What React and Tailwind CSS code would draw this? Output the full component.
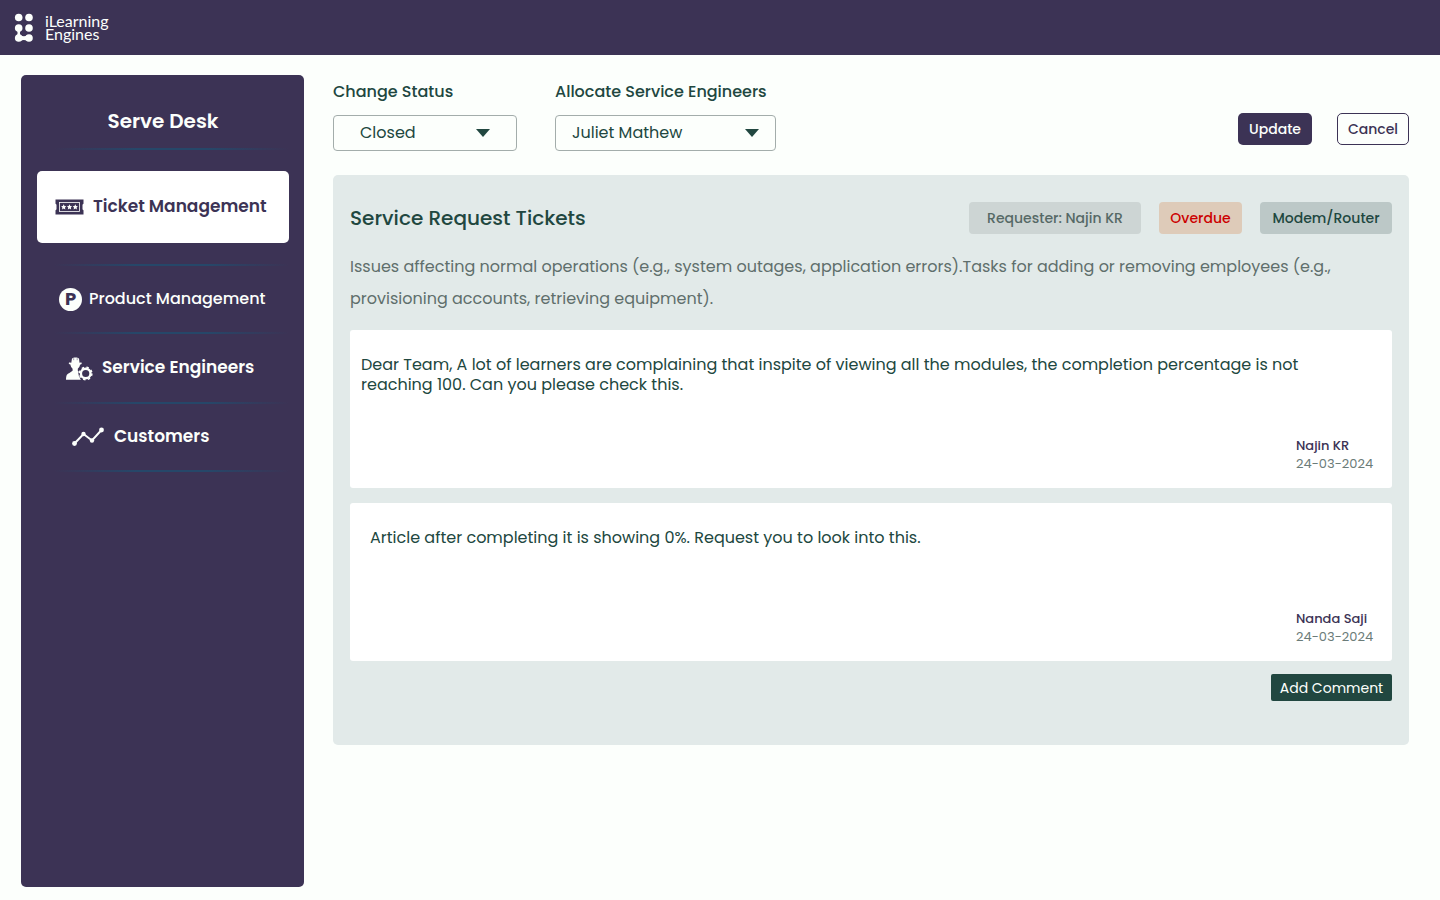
import React, { useState } from 'react';

const Logo = () => (
  <svg width="20" height="30" viewBox="0 0 20 30" fill="#fcfffc" aria-hidden="true">
    <circle cx="4.7" cy="4.5" r="3.8" />
    <circle cx="15" cy="4.5" r="3.8" />
    <circle cx="4.7" cy="15" r="3.8" />
    <circle cx="15" cy="15" r="3.8" />
    <circle cx="4.7" cy="25" r="3.8" />
    <circle cx="15" cy="25" r="3.8" />
    <path d="M2.9 17.5c.9 1.7.9 3.3 0 5l3.6 5c1.9-.8 4.8-.8 6.7 0v-5c-1.8.9-4.6.9-6.7 0-.7-1.6-.7-3.3 0-5z" />
  </svg>
);

const TicketIcon = () => (
  <svg width="29" height="16" viewBox="0 0 29 16" aria-hidden="true">
    <path fill="#3c3355" d="M.5.5h28v4.200a1.500 1.500 0 0 0-1 1.300v4a1.500 1.500 0 0 0 1 1.300v4.200H.5v-4.200a1.500 1.500 0 0 0 1-1.300V6a1.500 1.500 0 0 0-1-1.300z" />
    <rect x="4.500" y="3.500" width="20" height="9" fill="none" stroke="#fff" strokeWidth=".8" />
    <g fill="#fff">
      <path id="star" d="m8.700 5.300.8 1.700 1.800.2-1.300 1.300.3 1.900-1.600-.9-1.600.9.3-1.900-1.300-1.300 1.800-.2z" />
      <use href="#star" x="5.800" />
      <use href="#star" x="11.600" />
    </g>
  </svg>
);

const ProductIcon = () => (
  <span className="flex size-[23px] items-center justify-center rounded-full bg-[#fcfffc] text-lg font-bold leading-none text-[#3c3355]">
    P
  </span>
);

const EngineerIcon = () => (
  <svg width="27" height="25" viewBox="0 0 27 25" aria-hidden="true">
    {/* hard hat, head and shoulders */}
    <path
      fill="#fcfffc"
      d="M6 2.500C7.200 1 11.800 1 13 2.500l.5 4.200 1.300-.2c.8-.2 1.200.6.8 1.300-.3.6-.9.800-1.500.8-.3 1.900-1.100 3.100-2.300 4.100v2.100l2.500 1.500c-1 2.200-.8 4.700.5 7.400H0c0-4.500 1-5.700 3-6.500l3.600-2.400v-2.100C5.400 11.700 4.700 10.500 4.400 8.600c-.7 0-1.200-.3-1.500-.8-.4-.8.1-1.500.8-1.300l1.600.2z"
    />
    <path fill="none" stroke="#3c3355" strokeWidth=".5" d="M7.700 2.200v2M11.200 2.200v2" />
    <circle cx="19.700" cy="17.500" r="7.300" fill="#3c3355" />
    <circle cx="19.700" cy="17.500" r="4.800" fill="none" stroke="#fcfffc" strokeWidth="2.400" />
    <circle cx="19.700" cy="17.500" r="6.200" fill="none" stroke="#fcfffc" strokeWidth="1.500" strokeDasharray="2.435 2.435" />
  </svg>
);

const TrendIcon = () => (
  <svg width="32" height="20" viewBox="0 0 32 20" fill="#fcfffc" aria-hidden="true">
    <path fill="none" stroke="#fcfffc" strokeWidth="2" d="M2.500 16.500 11.500 7l8.500 6.500L29.500 3" />
    <circle cx="2.500" cy="16.500" r="2.400" />
    <circle cx="11.500" cy="7" r="2.200" />
    <circle cx="20" cy="13.500" r="2.200" />
    <circle cx="29.500" cy="3" r="2.400" />
  </svg>
);

const Divider = () => (
  <div className="ml-[17px] h-[2px] bg-[linear-gradient(90deg,transparent,#264769_35%,#264769_65%,transparent)]" />
);

const navItems = [
  { label: 'Product Management', icon: <ProductIcon />, className: 'h-[66px] gap-[7px] pl-[22px] text-base font-medium' },
  { label: 'Service Engineers', icon: <EngineerIcon />, className: 'h-[68px] gap-[9px] pl-[29px] text-[17px] font-semibold' },
  { label: 'Customers', icon: <TrendIcon />, className: 'h-[66px] gap-[10px] pl-[35px] text-[17px] font-semibold' },
];

const comments = [
  {
    text: 'Dear Team, A lot of learners are complaining that inspite of viewing all the modules, the completion percentage is not reaching 100. Can you please check this.',
    author: 'Najin KR',
    date: '24-03-2024',
    className: 'pl-[11px]',
  },
  {
    text: 'Article after completing it is showing 0%. Request you to look into this.',
    author: 'Nanda Saji',
    date: '24-03-2024',
    className: 'pl-5',
  },
];

const Sidebar = () => (
  <aside className="w-[283px] shrink-0 rounded-[5px] bg-[#3c3355] pt-8 pr-[15px] pl-4 text-[#fcfffc]">
    <h2 className="mb-[13px] text-center text-xl font-semibold leading-7">Serve Desk</h2>
    <Divider />
    <nav>
      <a
        href="#tickets"
        className="my-[21px] flex h-[72px] items-center gap-[9px] rounded-[5px] bg-white pl-[18px] text-[17px] font-semibold whitespace-nowrap text-[#3c3355]"
      >
        <TicketIcon />
        Ticket Management
      </a>
      <Divider />
      {navItems.map((item) => (
        <div key={item.label}>
          <a href="#nav" className={`flex items-center whitespace-nowrap ${item.className}`}>
            {item.icon}
            {item.label}
          </a>
          <Divider />
        </div>
      ))}
    </nav>
  </aside>
);

const SelectField = ({ id, label, value, onChange, options, className, arrowClassName }) => (
  <div className="flex flex-col gap-[11px]">
    <label htmlFor={id} className="text-base font-medium leading-6">
      {label}
    </label>
    <div className="relative">
      <select
        id={id}
        value={value}
        onChange={(e) => onChange(e.target.value)}
        className={`h-9 appearance-none rounded-[4px] border border-[#a3adab] bg-transparent text-base ${className}`}
      >
        {options.map((option) => (
          <option key={option}>{option}</option>
        ))}
      </select>
      <svg
        className={`pointer-events-none absolute top-[14px] ${arrowClassName}`}
        width="14"
        height="8"
        viewBox="0 0 14 8"
        aria-hidden="true"
      >
        <path fill="#214740" d="M0 0h14L7 8z" />
      </svg>
    </div>
  </div>
);

const Comment = ({ comment }) => (
  <article className="flex min-h-[158px] flex-col justify-between rounded-[3px] bg-white pt-[25px] pr-5 pb-[15px]">
    <p className={`text-base leading-5 ${comment.className}`}>{comment.text}</p>
    <footer className="w-[76px] self-end text-[13px] leading-[18px] whitespace-nowrap">
      <p className="font-medium text-[#3c3355]">{comment.author}</p>
      <p className="text-[#6b7c79]">{comment.date}</p>
    </footer>
  </article>
);

const App = () => {
  const [status, setStatus] = useState('Closed');
  const [engineer, setEngineer] = useState('Juliet Mathew');

  return (
    <div className="flex min-h-screen flex-col bg-[#fcfffc] font-[Poppins,Inter,sans-serif] text-[#214740]">
      <header className="flex h-[55px] items-center gap-[11px] bg-[#3c3355] pl-[14px]">
        <Logo />
        <p className="pb-[2px] font-[Lato,sans-serif] text-base leading-[13px] text-[#fcfffc]">
          iLearning
          <br />
          Engines
        </p>
      </header>

      <div className="flex flex-1 gap-[29px] pt-5 pr-[31px] pb-[13px] pl-[21px]">
        <Sidebar />

        <main className="min-w-0 flex-1 pt-[5px]">
          <div className="flex items-start justify-between">
            <div className="flex gap-[38px]">
              <SelectField
                id="status"
                label="Change Status"
                value={status}
                onChange={setStatus}
                options={['Closed', 'Open', 'In Progress']}
                className="w-[184px] pl-[26px]"
                arrowClassName="right-[27px]"
              />
              <SelectField
                id="engineer"
                label="Allocate Service Engineers"
                value={engineer}
                onChange={setEngineer}
                options={['Juliet Mathew', 'Nanda Saji']}
                className="w-[221px] pl-4"
                arrowClassName="right-[17px]"
              />
            </div>
            <div className="flex gap-[25px] pt-[33px] text-sm font-medium">
              <button type="button" className="h-8 w-[74px] rounded-[5px] bg-[#3c3355] text-[#fcfffc]">
                Update
              </button>
              <button type="button" className="h-8 w-[72px] rounded-[5px] border border-[#3c3355] text-[#3c3355]">
                Cancel
              </button>
            </div>
          </div>

          <section className="mt-6 rounded-[5px] bg-[#e2eae9] px-[17px] pt-[27px] pb-11">
            <div className="flex items-center justify-between">
              <h1 className="text-xl font-medium">Service Request Tickets</h1>
              <div className="flex gap-[18px] text-sm font-medium">
                <span className="flex h-8 w-[172px] items-center justify-center rounded-[4px] bg-[#cdd5d4] text-[#566966]">
                  Requester: Najin KR
                </span>
                <span className="flex h-8 w-[83px] items-center justify-center rounded-[4px] bg-[#decbb9] text-[#cc0000]">
                  Overdue
                </span>
                <span className="flex h-8 w-[132px] items-center justify-center rounded-[4px] bg-[#bcc8c7]">
                  Modem/Router
                </span>
              </div>
            </div>
            <p className="mt-[17px] text-base leading-8 text-[#5f6f6c]">
              Issues affecting normal operations (e.g., system outages, application errors).Tasks for adding or removing
              employees (e.g., provisioning accounts, retrieving equipment).
            </p>

            <div className="mt-[15px] flex flex-col gap-[15px]">
              {comments.map((comment) => (
                <Comment key={comment.author} comment={comment} />
              ))}
            </div>
            <div className="mt-[13px] flex justify-end">
              <button type="button" className="h-[27px] w-[121px] rounded-[2px] bg-[#214740] text-sm text-[#fcfffc]">
                Add Comment
              </button>
            </div>
          </section>
        </main>
      </div>
    </div>
  );
};

export default App;
